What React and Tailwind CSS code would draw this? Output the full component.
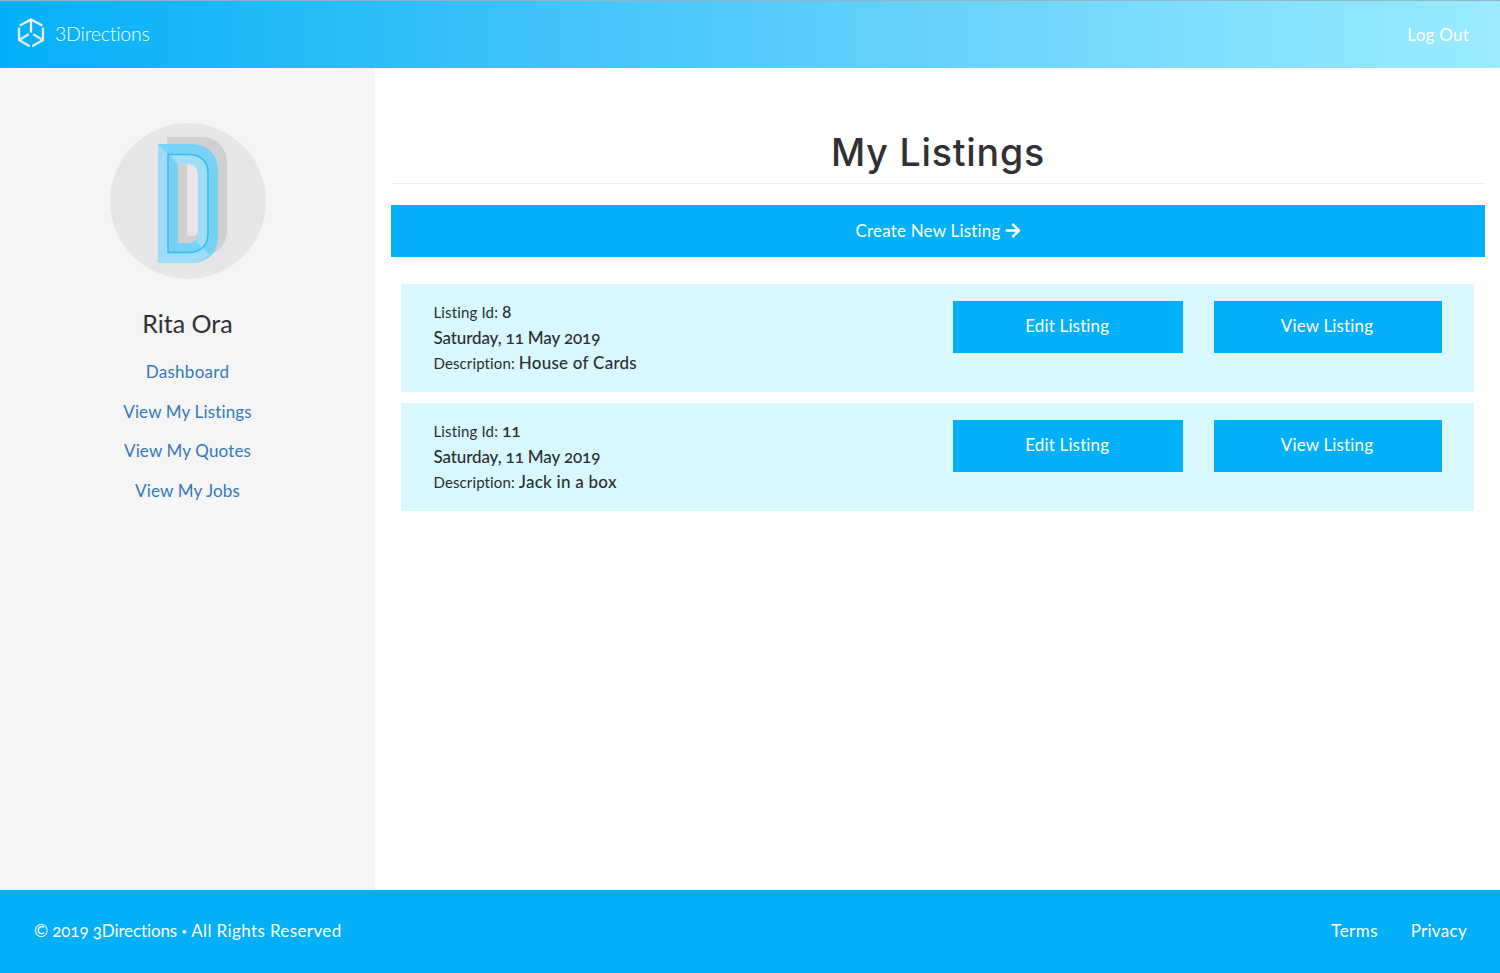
import { FaArrowRight } from "react-icons/fa";

const listings = [
  { id: "8", date: "Saturday, 11 May 2019", description: "House of Cards" },
  { id: "11", date: "Saturday, 11 May 2019", description: "Jack in a box" },
];
const links = ["Dashboard", "View My Listings", "View My Quotes", "View My Jobs"];

function Logo() {
  return (
    <svg className="h-[30px] w-[28px]" viewBox="0 0 28 30" fill="none" stroke="#e4eaf0" strokeWidth="2.3">
      <path stroke="#f6fafd" d="M2.800 7.600 14 1.500 25.200 7.600M14 2v12.500" />
      <path d="M2 9.500v12.500l10.800 6.200M2.500 21.800 11.800 16.200" />
      <path d="M26 9.500v12.500l-10.800 6.200M25.500 21.800 16.200 16.200" />
    </svg>
  );
}

function Avatar() {
  return (
    <svg className="h-[156px] w-[156px]" viewBox="0 0 156 156">
      <circle cx="78" cy="78" r="78" fill="#e6e6e8" />
      <path fillRule="evenodd" fill="#cfd0d2" d="M57 14H91C107 14 117 25 117 40V107C117 122 107 133 91 133H57ZM77 41V113H84Q88 112 88 107V48Q88 42 82 41Z" />
      <path fillRule="evenodd" fill="#76d1f4" d="M48 21H81C98 21 108 32 108 47V114C108 129 98 140 81 140H48ZM68 41V120H80Q88 119 88 111V50Q88 42 80 41Z" />
      <path fill="#a0dcf6" d="M48 21 58 31V130H79Q88 130 92.500 124.500L99.500 132Q92 140 81 140H48Z" />
      <path fill="#a0dcf6" d="M58 31H79C91 31 98 39 98 50V110Q98 118 92.500 124.500L86 118.500Q88 116 88 111V50Q88 42 80 41H68Z" />
      <path fill="none" stroke="#2fbff0" strokeWidth="1.500" d="M58 31.500H79C91 31.500 98 39 98 50V110C98 122 91 129.500 79 129.500H58Z" />
    </svg>
  );
}

function Listing({ item }) {
  return (
    <article className="flex h-[108px] bg-[#d9f8fe] pl-[32.500px] pr-[32px] pt-[17px]">
      <div className="-mt-[2px] w-[519.500px] shrink-0 text-[17px] leading-[25px] text-[#2b2e30]">
        <p><span className="text-[15px] tracking-[0.15px]">Listing Id: </span><span className="text-[17.500px] font-medium tracking-[-0.3px] oldstyle-nums">{item.id}</span></p>
        <p className="font-medium tracking-[-0.12px] oldstyle-nums">{item.date}</p>
        <p><span className="text-[15px] tracking-[0.12px]">Description: </span><span className="font-medium tracking-[0.25px]">{item.description}</span></p>
      </div>
      <div className="flex shrink-0 gap-[31px]">
        <button className="h-[52px] w-[229.500px] bg-[#03b0f8] pb-[2px] pr-px tracking-[0.15px] text-white">Edit Listing</button>
        <button className="h-[52px] w-[228px] bg-[#03b0f8] pb-[2px] pr-px tracking-[0.15px] text-white">View Listing</button>
      </div>
    </article>
  );
}

export default function App() {
  return (
    <div className="flex h-[973px] flex-col bg-white font-['Lato',sans-serif] text-[17px] [font-variant-ligatures:none]">
      <header className="flex h-[68px] items-center justify-between border-t border-[#8fb5c6] bg-[linear-gradient(90deg,#03b0f8,#55cbfb_50%,#9aecff)] pl-[17px] pr-[31px] text-white">
        <div className="flex items-center gap-[10px] pb-[3px]">
          <Logo />
          <span className="pt-px text-[19.500px] font-light tracking-[-0.2px]">3Directions</span>
        </div>
        <a className="tracking-[0.25px]">Log Out</a>
      </header>
      <div className="flex flex-1">
        <aside className="flex w-[375px] flex-col items-center bg-[#f5f5f5] pt-[55px]">
          <Avatar />
          <h2 className="mt-[26px] text-[25px] leading-[36px] text-[#2f3133]">Rita Ora</h2>
          <nav className="mt-[11px] flex flex-col items-center tracking-[0.15px] text-[#337ab7]">
            {links.map((l) => <a key={l} className="h-[39.700px] leading-[39.700px] first:tracking-[0.3px]">{l}</a>)}
          </nav>
        </aside>
        <main className="flex-1 pl-4 pr-[15px]">
          <h1 className="mt-[62px] h-[53px] text-center font-['Inter',sans-serif] text-[37.500px] font-medium leading-[46px] tracking-[0.8px] text-[#2f3133]">My Listings</h1>
          <hr className="border-[#eeeeee]" />
          <button className="mt-[21px] flex h-[52px] w-full items-center justify-center gap-1 bg-[#03b0f8] pb-px tracking-[0.2px] text-white">
            Create New Listing <FaArrowRight className="h-[17px] w-[16px]" />
          </button>
          <section className="ml-[10px] mr-[11px] mt-[27px] flex flex-col gap-[11px]">
            {listings.map((x) => <Listing key={x.id} item={x} />)}
          </section>
        </main>
      </div>
      <footer className="flex h-[83px] items-center justify-between bg-[#03b0f8] pb-px pl-[34px] pr-[33px] text-white">
        <p className="oldstyle-nums"><span className="tracking-[-0.12px]">© 2019 3Directions </span><span className="align-[2px] text-[10px]">•</span><span className="tracking-[0.38px]"> All Rights Reserved</span></p>
        <div className="flex gap-[32.500px]"><a className="tracking-[0.5px]">Terms</a><a className="tracking-[0.3px]">Privacy</a></div>
      </footer>
    </div>
  );
}
